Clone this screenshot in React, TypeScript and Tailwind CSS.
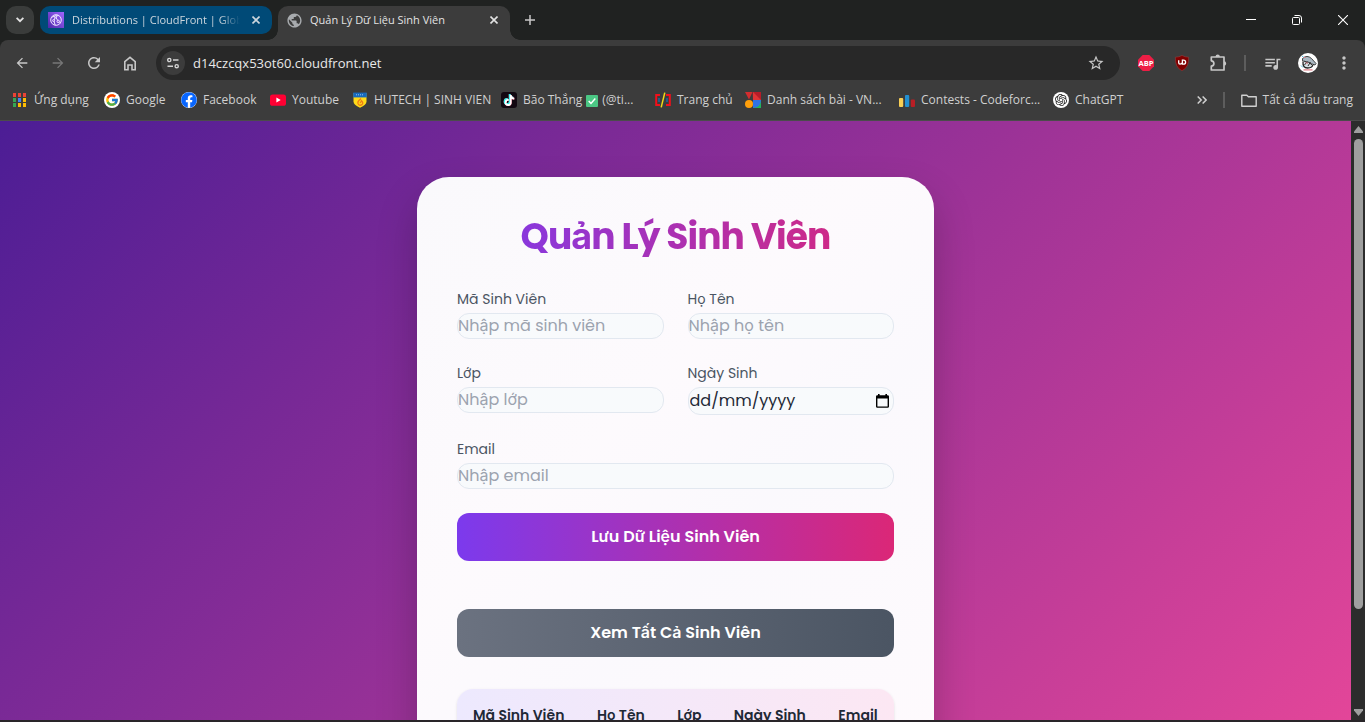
import type { ReactNode } from "react";
import { MdArrowBack, MdArrowForward, MdRefresh, MdStarBorder, MdPublic, MdMoreVert, MdQueueMusic } from "react-icons/md";
import { FcGoogle } from "react-icons/fc";
import { FaTiktok, FaFacebook } from "react-icons/fa";
import { SiOpenai } from "react-icons/si";

const iconButton = "flex h-9 w-9 shrink-0 items-center justify-center rounded-full text-[#c7c7c7]";

function CloseIcon() {
  return (
    <svg width="8" height="8" viewBox="0 0 8 8" stroke="currentColor" strokeWidth="1.6" fill="none">
      <path d="M0.5 0.5L7.5 7.5M7.5 0.5L0.5 7.5" />
    </svg>
  );
}

function TabStrip() {
  return (
    <header className="flex h-10 shrink-0 bg-[#202221] text-[11px] text-[#e3e3e3]">
      <button aria-label="Tìm kiếm thẻ" className="mt-1.5 ml-1.5 flex h-7 w-7 shrink-0 items-center justify-center rounded-[10px] bg-[#3a3c3b]">
        <svg width="8" height="6" viewBox="0 0 8 6" fill="none" stroke="currentColor" strokeWidth="1.8">
          <path d="M0.6 0.8L4 4.2L7.4 0.8" />
        </svg>
      </button>
      <div className="mt-1.5 ml-1.5 flex h-7 w-[232px] items-center rounded-[10px] bg-[#004a77] pr-3 pl-2">
        <svg width="16" height="16" viewBox="0 0 16 16" className="shrink-0">
          <defs>
            <linearGradient id="cf" x1="0" y1="1" x2="1" y2="0">
              <stop stopColor="#4d27a8" />
              <stop offset="1" stopColor="#a166ff" />
            </linearGradient>
          </defs>
          <path fill="url(#cf)" d="M0 0h16v16H0z" />
          <g fill="none" stroke="#efe6ff" strokeWidth="1">
            <circle cx="8" cy="8" r="5.3" />
            <path d="M3.4 5.4Q7 3.6 10.6 3.6M7.2 13.1Q4.5 9 7.4 4.6M12.6 11Q9.5 9.2 7.4 4.6" />
            <circle cx="10.2" cy="9.4" r="1.2" fill="#8850dc" />
            <circle cx="5.6" cy="8.6" r="1" fill="#8850dc" />
            <circle cx="7.6" cy="4.8" r="1" fill="#8850dc" />
          </g>
        </svg>
        <span className="ml-2 flex-1 overflow-hidden whitespace-nowrap text-[#ccd6dd] [mask-image:linear-gradient(to_right,#000_88%,transparent)]">
          Distributions | CloudFront | Global
        </span>
        <button aria-label="Đóng thẻ Distributions" className="ml-3 text-[#ccd6dd]"><CloseIcon /></button>
      </div>
      <div className="relative mt-1.5 ml-1.5 flex w-[232px] items-start rounded-t-[10px] bg-[#3c3c3c] pr-3 pl-2">
        <span className="absolute bottom-0 -left-2.5 h-2.5 w-2.5 bg-[radial-gradient(circle_at_0_0,transparent_9.5px,#3c3c3c_10px)]" />
        <span className="absolute -right-2.5 bottom-0 h-2.5 w-2.5 bg-[radial-gradient(circle_at_100%_0,transparent_9.5px,#3c3c3c_10px)]" />
        <div className="flex h-7 w-full items-center">
          <MdPublic size={17} className="shrink-0 text-[#a8abae]" />
          <span className="ml-[7px] flex-1 whitespace-nowrap">Quản Lý Dữ Liệu Sinh Viên</span>
          <button aria-label="Đóng thẻ Quản Lý Dữ Liệu Sinh Viên"><CloseIcon /></button>
        </div>
      </div>
      <button aria-label="Thẻ mới" className="ml-1.5 flex w-7 items-center justify-center text-[#c7c7c7]">
        <svg width="10" height="10" viewBox="0 0 10 10" stroke="currentColor" strokeWidth="1.5"><path d="M5 0v10M0 5h10" /></svg>
      </button>
      <div className="ml-auto -mr-px flex text-white">
        <button aria-label="Thu nhỏ" className="flex w-[46px] items-center justify-center">
          <svg width="10" height="10" viewBox="0 0 10 10" stroke="currentColor"><path d="M0 4.5h10" /></svg>
        </button>
        <button aria-label="Khôi phục" className="flex w-[46px] items-center justify-center">
          <svg width="10" height="10" viewBox="0 0 10 10" fill="none" stroke="currentColor">
            <rect x="0.5" y="2.5" width="7" height="7" rx="1" />
            <path d="M2.5 0.5H7A2.5 2.5 0 0 1 9.5 3V7.5" />
          </svg>
        </button>
        <button aria-label="Đóng" className="flex w-[46px] items-center justify-center">
          <svg width="10" height="10" viewBox="0 0 10 10" stroke="currentColor" strokeWidth="1.1"><path d="M0 0l10 10M10 0L0 10" /></svg>
        </button>
      </div>
    </header>
  );
}

function Toolbar() {
  return (
    <div className="flex h-[46px] shrink-0 items-center rounded-t-lg bg-[#3c3c3c] pr-[3px] pl-1">
      <button aria-label="Quay lại" className={iconButton}><MdArrowBack size={16} /></button>
      <button aria-label="Tiến" className={iconButton}><MdArrowForward size={16} className="text-[#777777]" /></button>
      <button aria-label="Tải lại" className={iconButton}><MdRefresh size={18} /></button>
      <button aria-label="Trang chủ" className={iconButton}>
        <svg width="14" height="15" viewBox="0 0 14 15" fill="none" stroke="currentColor" strokeWidth="1.6">
          <path d="M1.8 5.6L7 1.4l5.2 4.2V13.7H9V9H5v4.7H1.8z" />
        </svg>
      </button>
      <div className="ml-2 flex h-[34px] flex-1 items-center rounded-full bg-[#282828] pr-1.5 pl-[5px]">
        <button aria-label="Thông tin trang" className="flex h-6 w-6 items-center justify-center rounded-full bg-[#3c3c3c] text-[#d5d5d5]">
          <svg width="12" height="12" viewBox="0 0 12 12" fill="none" stroke="currentColor" strokeWidth="1.4">
            <circle cx="2.3" cy="3" r="1.6" /><path d="M6 3h5.5M0.5 9.2H6" /><circle cx="9.7" cy="9.2" r="1.6" />
          </svg>
        </button>
        <input aria-label="Địa chỉ" defaultValue="d14czcqx53ot60.cloudfront.net" className="ml-2 flex-1 bg-transparent pt-px text-[13px] text-[#e8e8e8] outline-none" />
        <button aria-label="Đánh dấu trang" className="flex w-9 justify-center text-[#c7c7c7]"><MdStarBorder size={18} /></button>
      </div>
      <div className="ml-2 flex items-center">
        <button aria-label="Adblock Plus" className={iconButton}>
          <svg width="16" height="16" viewBox="0 0 16 16">
            <path fill="#ed1e45" d="M4.7 0h6.6L16 4.7v6.6L11.3 16H4.7L0 11.3V4.7z" />
            <text x="8" y="10.8" textAnchor="middle" fontSize="7.6" fontWeight="700" fill="#fff">ABP</text>
          </svg>
        </button>
        <button aria-label="uBlock Origin" className={iconButton}>
          <svg width="16" height="16" viewBox="0 0 16 16">
            <path fill="#800000" stroke="#a04040" strokeWidth="0.5" d="M8 0.4Q10.8 2.2 14.6 2.2Q15.2 12.4 8 15.7Q0.8 12.4 1.4 2.2Q5.2 2.2 8 0.4z" />
            <path d="M4.7 5.2v2.6q0 1.4 1.4 1.4t1.4-1.4M8.400 5.200v4h1q2.200 0 2.200-2t-2.200-2z" fill="none" stroke="#fff" strokeWidth="1.3" />
          </svg>
        </button>
        <button aria-label="Tiện ích" className={iconButton}>
          <svg width="18" height="18" viewBox="0 0 18 18" fill="none" stroke="currentColor" strokeWidth="1.7" strokeLinejoin="round">
            <path fill="currentColor" stroke="none" d="M6.500 3q0-2.400 2.200-2.400T10.900 3zM15 7.200q2.200 0 2.200 2.200T15 11.600z" />
            <path d="M2.300 3H15v13H2.300v-3.800q2.600-.3 2.600-2.700T2.300 6.800z" />
          </svg>
        </button>
        <span className="mx-2 h-4 w-0.5 bg-[#5d5d5d]" />
        <button aria-label="Điều khiển nội dung" className={iconButton}><MdQueueMusic size={19} /></button>
        <button aria-label="Hồ sơ" className={iconButton}>
          <svg width="20" height="20" viewBox="0 0 20 20">
            <circle cx="10" cy="10" r="10" fill="#fff" />
            <path d="M4.500 5.500Q9 1.400 13.500 5.500L18 10.500L17 12L4.500 7.800z" fill="#aab8c2" stroke="#333" strokeWidth="0.900" />
            <path d="M5 8.500Q4.500 15 9.500 15Q14.500 15 15 11.500" fill="#d5e0e4" stroke="#222" strokeWidth="1.300" />
            <path d="M6.500 8l3 2M9.500 8l-3 4M10.500 9l3.500 3M12.500 9l-2.500 4" stroke="#303030" strokeWidth="1" />
            <path d="M4 3l2.500 2M3 12.500l2 2" stroke="#53b9df" strokeWidth="1" />
            <path d="M5.500 16.800h9M7.500 10h2.500M5.500 4.500h2" stroke="#e07d86" strokeWidth="1.200" />
          </svg>
        </button>
        <button aria-label="Menu" className={iconButton}><MdMoreVert size={20} /></button>
      </div>
    </div>
  );
}

const appColors = ["#ea4335", "#ea4335", "#ea4335", "#34a853", "#4285f4", "#fbbc04", "#34a853", "#fbbc04", "#fbbc04"];

const bookmarks: { label: string; icon: ReactNode }[] = [
  {
    label: "Ứng dụng",
    icon: (
      <svg width="16" height="16" viewBox="0 0 16 16">
        {appColors.map((color, i) => (
          <rect key={i} x={1 + (i % 3) * 5} y={1 + Math.floor(i / 3) * 5} width="3" height="4" fill={color} />
        ))}
      </svg>
    ),
  },
  { label: "Google", icon: <span className="flex h-4 w-4 items-center justify-center rounded-full bg-white"><FcGoogle size={14} /></span> },
  { label: "Facebook", icon: <span className="flex h-4 w-4 items-center justify-center rounded-full bg-white"><FaFacebook size={16} className="text-[#0866ff]" /></span> },
  {
    label: "Youtube",
    icon: (
      <svg width="16" height="16" viewBox="0 0 16 16">
        <rect y="2.400" width="16" height="11.400" rx="2.600" fill="#ff0033" />
        <path fill="#fff" d="M6.400 5.600v5l4.300-2.500z" />
      </svg>
    ),
  },
  {
    label: "HUTECH | SINH VIEN",
    icon: (
      <svg width="16" height="16" viewBox="0 0 16 16">
        <path fill="#ffda18" d="M1.500 1h13v8.500q0 3.500-6.500 6.200Q1.500 13 1.500 9.500z" />
        <path fill="#1769bd" d="M1.200 0.600h13.600v4.800H1.200z" />
        <path stroke="#9bc5ec" strokeWidth="1" strokeDasharray="1 1" d="M4 2.800h8" />
        <path fill="none" stroke="#ef7a16" strokeWidth="1.300" d="M9 6.600q-4.200 3-2.800 5.400 1.400 2.200 3.800.6 1.800-1.800-.6-3.800-.2 1.800-1.600 2" />
      </svg>
    ),
  },
  {
    label: "Bão Thắng ✅ (@ti...",
    icon: (
      <span className="flex h-4 w-4 items-center justify-center rounded-[3px] bg-[#120811] text-white">
        <FaTiktok size={11} className="[filter:drop-shadow(-0.6px_-0.4px_0_#25f4ee)_drop-shadow(0.6px_0.4px_0_#fe2c55)]" />
      </span>
    ),
  },
  {
    label: "Trang chủ",
    icon: (
      <svg width="16" height="16" viewBox="0 0 16 16" fill="none">
        <path d="M5 3H1.200v10H5M11 3h3.800v10H11" stroke="#f20f1b" strokeWidth="2" />
        <path d="M4 6v4M12 6v4" stroke="#176cae" strokeWidth="1.400" />
        <path d="M9.800 0.600L6.200 15.400" stroke="#f2da16" strokeWidth="1.500" />
      </svg>
    ),
  },
  {
    label: "Danh sách bài - VN...",
    icon: (
      <svg width="16" height="16" viewBox="0 0 16 16">
        <path fill="#d32d2f" d="M0 0h7.500L4 7.500z" />
        <path fill="#b71c28" d="M7.500 0H16v8H8z" /><path fill="#df3435" d="M8 0l8 8H8z" />
        <circle cx="4" cy="12" r="4" fill="#ff9f0b" />
        <path fill="#22b35b" d="M8 8h8v8H8z" /><path fill="#2f72e5" d="M8 8h8q0 7-8 8z" />
      </svg>
    ),
  },
  {
    label: "Contests - Codeforc...",
    icon: (
      <svg width="16" height="16" viewBox="0 0 16 16">
        <rect x="0" y="6" width="4.200" height="9" rx="1" fill="#f8cf55" />
        <rect x="6" y="3" width="4.200" height="12" rx="1" fill="#2290d2" />
        <rect x="11.800" y="7.500" width="4.200" height="7.500" rx="1" fill="#b81e25" />
      </svg>
    ),
  },
  { label: "ChatGPT", icon: <span className="flex h-4 w-4 items-center justify-center rounded-full bg-white"><SiOpenai size={12} className="text-[#202020]" /></span> },
];

function Check() {
  return (
    <svg role="img" aria-label="✅" width="12" height="12" viewBox="0 0 12 12" className="mx-1 inline-block">
      <rect width="12" height="12" rx="1" fill="#4bc784" />
      <path d="M2.700 6l2.300 2.400 4.300-4.800" fill="none" stroke="#fff" strokeWidth="1.500" />
    </svg>
  );
}

function BookmarkBar() {
  return (
    <nav aria-label="Dấu trang" className="flex h-[35px] shrink-0 items-start border-b border-[#4b4b4b] bg-[#3c3c3c] pl-3 text-xs text-[#d0d0d0]">
      <div className="grid h-7 flex-1 grid-cols-[92px_77px_89px_82px_149px_154px_90px_154px_154px_auto] items-center">
        {bookmarks.map(({ label, icon }) => {
          const [before, after] = label.split(" ✅ ");
          return (
            <a key={label} href="#" className="flex items-center gap-1.5 whitespace-nowrap">
              <span className="shrink-0">{icon}</span>
              <span>{before}{after && <><Check />{after}</>}</span>
            </a>
          );
        })}
      </div>
      <div className="flex h-7 shrink-0 items-center pr-3">
        <button aria-label="Dấu trang khác">
          <svg width="10" height="8" viewBox="0 0 10 8" fill="none" stroke="currentColor" strokeWidth="1.500"><path d="M0.700 0.500L4.200 4 .700 7.500M5.600.500L9.100 4 5.600 7.500" /></svg>
        </button>
        <span className="mr-4 ml-4 h-4 w-0.5 bg-[#5d5d5d]" />
        <a href="#" className="flex items-center gap-1.5 whitespace-nowrap">
          <svg width="16" height="13" viewBox="0 0 16 13" fill="none" stroke="currentColor" strokeWidth="1.400" strokeLinejoin="round"><path d="M.8 1.200h5l1.600 1.600h7.800v9.400H.8z" /></svg>
          Tất cả dấu trang
        </a>
      </div>
    </nav>
  );
}

function Field({ id, label, placeholder, wide }: { id: string; label: string; placeholder: string; wide?: boolean }) {
  return (
    <div className={wide ? "col-span-2" : ""}>
      <label htmlFor={id} className="mb-1 block text-sm text-[#4b5563]">{label}</label>
      <input id={id} placeholder={placeholder} className="block h-[26px] w-full rounded-xl border border-[#e2e8f0] bg-[#f8fafc] pb-0.5 text-base text-[#1f2937] placeholder:text-[#9ca3af]" />
    </div>
  );
}

function DateField() {
  return (
    <div>
      <label htmlFor="birth" className="mb-1 block text-sm text-[#4b5563]">Ngày Sinh</label>
      <div className="flex h-7 items-center rounded-xl border border-[#e2e8f0] bg-[#f8fafc] pr-1 pl-px">
        <input id="birth" placeholder="dd/mm/yyyy" className="w-full min-w-0 bg-transparent text-base text-[#1f2937] outline-none placeholder:text-[#1f2937]" />
        <button type="button" aria-label="Chọn ngày" className="shrink-0 text-black">
          <svg width="13" height="14" viewBox="0 0 13 14"><path fill="currentColor" fillRule="evenodd" d="M2 0h1.600v1.200h5.800V0H11v1.200h.6q1.400 0 1.400 1.400v9.800q0 1.400-1.400 1.400H1.400Q0 13.800 0 12.400V2.600Q0 1.200 1.400 1.200H2zM1.400 4.600v7.800h10.200V4.600z" /></svg>
        </button>
      </div>
    </div>
  );
}

function StudentCard() {
  return (
    <section className="w-full max-w-[517px] rounded-[32px] bg-[linear-gradient(135deg,#faf9fc,#fdfafd_40%,#fbf9fd_60%,#fefafd)] p-10 font-['Poppins','Inter',sans-serif] shadow-[0_20px_40px_rgba(0,0,0,0.22)]">
      <h1 className="mb-8 bg-[linear-gradient(90deg,#7c3aed,#db2777)] bg-clip-text text-center text-4xl font-bold tracking-tight text-transparent">Quản Lý Sinh Viên</h1>
      <form onSubmit={(event) => event.preventDefault()}>
        <div className="grid grid-cols-2 gap-6">
          <Field id="code" label="Mã Sinh Viên" placeholder="Nhập mã sinh viên" />
          <Field id="name" label="Họ Tên" placeholder="Nhập họ tên" />
          <Field id="class" label="Lớp" placeholder="Nhập lớp" />
          <DateField />
          <Field id="email" label="Email" placeholder="Nhập email" wide />
        </div>
        <button className="mt-6 h-12 w-full rounded-xl bg-[linear-gradient(90deg,#7c3aed,#db2777)] font-semibold text-white">Lưu Dữ Liệu Sinh Viên</button>
      </form>
      <button className="mt-12 h-12 w-full rounded-xl bg-[linear-gradient(90deg,#6b7280,#4b5563)] font-semibold text-white">Xem Tất Cả Sinh Viên</button>
      <div className="mt-8 overflow-hidden rounded-2xl shadow-sm">
        <table className="w-full bg-[linear-gradient(90deg,#ede9fe,#fce7f3)] text-sm text-[#1f2937]">
          <thead>
            <tr className="text-left whitespace-nowrap">
              {["Mã Sinh Viên", "Họ Tên", "Lớp", "Ngày Sinh", "Email"].map((name) => (
                <th key={name} scope="col" className="p-4 font-semibold">{name}</th>
              ))}
            </tr>
          </thead>
          <tbody />
        </table>
      </div>
    </section>
  );
}

function Scrollbar() {
  return (
    <div aria-hidden="true" className="flex w-3.5 shrink-0 flex-col items-center bg-[#2c2c2c] pt-[5px] pb-1 text-[#9f9f9f]">
      <svg width="9" height="7" viewBox="0 0 9 7"><path fill="currentColor" d="M4.500 0L9 5.500V7H0V5.500z" /></svg>
      <div className="mt-1.5 mb-[100px] w-[9px] flex-1 rounded-full bg-[#9f9f9f]" />
      <svg width="9" height="7" viewBox="0 0 9 7"><path fill="currentColor" d="M4.500 7L9 1.500V0H0V1.500z" /></svg>
    </div>
  );
}

export default function App() {
  return (
    <div className="flex h-screen flex-col overflow-hidden border-b-2 border-[#292529] bg-[#202221] font-['Segoe_UI','Open_Sans',sans-serif]">
      <TabStrip />
      <Toolbar />
      <BookmarkBar />
      <div className="flex min-h-0 flex-1">
        <main className="flex-1 overflow-y-auto [scrollbar-width:none]">
          <div className="flex justify-center bg-[linear-gradient(135deg,#4c1d95,#ec4899)] py-14">
            <StudentCard />
          </div>
        </main>
        <Scrollbar />
      </div>
    </div>
  );
}
